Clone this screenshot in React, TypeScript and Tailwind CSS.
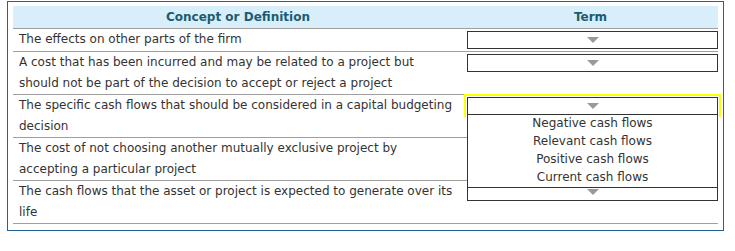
import React from "react";

const rows = [
  "The effects on other parts of the firm",
  "A cost that has been incurred and may be related to a project but should not be part of the decision to accept or reject a project",
  "The specific cash flows that should be considered in a capital budgeting decision",
  "The cost of not choosing another mutually exclusive project by accepting a particular project",
  "The cash flows that the asset or project is expected to generate over its life",
];

const options = ["Negative cash flows", "Relevant cash flows", "Positive cash flows", "Current cash flows"];

function Arrow() {
  return (
    <svg width="12" height="6" viewBox="0 0 12 6" className="block">
      <polygon points="0,0 12,0 6,6" fill="#9a9a9a" />
    </svg>
  );
}

function Select({ open }: { open?: boolean }) {
  return (
    <div className="relative">
      {open && (
        <div className="absolute left-[-3px] right-[-3px] top-[-3px] h-[23px] border-[2px] border-[#ffff00] border-b-0" />
      )}
      <div className="relative flex h-[18px] items-center justify-center border border-[#333333] bg-white">
        <Arrow />
      </div>
      {open && (
        <div className="absolute left-0 right-0 top-[17px] z-10 flex flex-col border border-[#333333] bg-white">
          {options.map((o) => (
            <div key={o} className="h-[18px] text-center leading-[16px] text-[#333333]">
              {o}
            </div>
          ))}
        </div>
      )}
    </div>
  );
}

export default function App() {
  return (
    <div className="h-[251px] w-[735px] bg-white pl-[7px] pt-[1px]" style={{ fontFamily: '"DejaVu Sans", Verdana, sans-serif' }}>
      <div className="w-[717px] border border-[#1f6497] px-[5px] pb-[6px] pt-[4px] text-[12px] text-[#333333]">
        <div className="flex h-[23px] border-b border-[#a0a0a0] bg-[#d8eefa] font-bold text-[#1b5d70]">
          <div className="flex w-[450px] items-center justify-center">Concept or Definition</div>
          <div className="flex flex-1 items-center justify-center">Term</div>
        </div>
        {rows.map((r, i) => (
          <div key={i} className={`flex border-b border-[#a0a0a0] ${i === 0 ? "min-h-[23px]" : ""}`}>
            <div className="w-[450px] pl-[6px] pr-[9px] leading-[21px]">{r}</div>
            <div className="flex-1 pl-[4px] pt-[2px]">
              <Select open={i === 2} />
            </div>
          </div>
        ))}
      </div>
    </div>
  );
}
